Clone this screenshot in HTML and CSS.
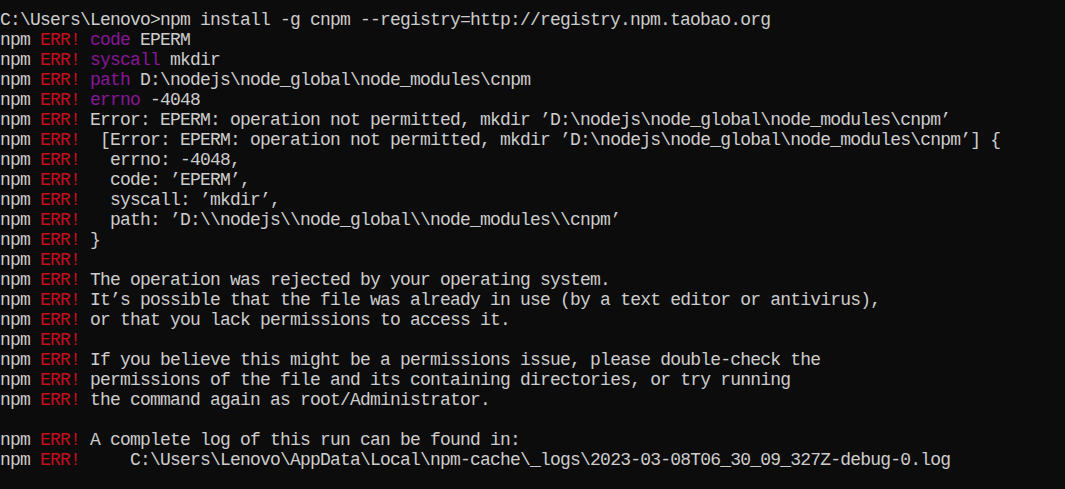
FILE: index.html
```html
<!DOCTYPE html>
<html lang="en">
<head>
<meta charset="utf-8">
<title>npm install error</title>
<link rel="stylesheet" href="styles.css">
</head>
<body>
<main class="console">
<div class="line">C:\Users\Lenovo&gt;npm install -g cnpm --registry=http://registry.npm.taobao.org</div>
<div class="line">npm <span class="err">ERR!</span> <span class="key">code</span> EPERM</div>
<div class="line">npm <span class="err">ERR!</span> <span class="key">syscall</span> mkdir</div>
<div class="line">npm <span class="err">ERR!</span> <span class="key">path</span> D:\nodejs\node_global\node_modules\cnpm</div>
<div class="line">npm <span class="err">ERR!</span> <span class="key">errno</span> -4048</div>
<div class="line">npm <span class="err">ERR!</span> Error: EPERM: operation not permitted, mkdir ’D:\nodejs\node_global\node_modules\cnpm’</div>
<div class="line">npm <span class="err">ERR!</span>  [Error: EPERM: operation not permitted, mkdir ’D:\nodejs\node_global\node_modules\cnpm’] {</div>
<div class="line">npm <span class="err">ERR!</span>   errno: -4048,</div>
<div class="line">npm <span class="err">ERR!</span>   code: ’EPERM’,</div>
<div class="line">npm <span class="err">ERR!</span>   syscall: ’mkdir’,</div>
<div class="line">npm <span class="err">ERR!</span>   path: ’D:\\nodejs\\node_global\\node_modules\\cnpm’</div>
<div class="line">npm <span class="err">ERR!</span> }</div>
<div class="line">npm <span class="err">ERR!</span></div>
<div class="line">npm <span class="err">ERR!</span> The operation was rejected by your operating system.</div>
<div class="line">npm <span class="err">ERR!</span> It’s possible that the file was already in use (by a text editor or antivirus),</div>
<div class="line">npm <span class="err">ERR!</span> or that you lack permissions to access it.</div>
<div class="line">npm <span class="err">ERR!</span></div>
<div class="line">npm <span class="err">ERR!</span> If you believe this might be a permissions issue, please double-check the</div>
<div class="line">npm <span class="err">ERR!</span> permissions of the file and its containing directories, or try running</div>
<div class="line">npm <span class="err">ERR!</span> the command again as root/Administrator.</div>
<div class="line"></div>
<div class="line">npm <span class="err">ERR!</span> A complete log of this run can be found in:</div>
<div class="line">npm <span class="err">ERR!</span>     C:\Users\Lenovo\AppData\Local\npm-cache\_logs\2023-03-08T06_30_09_327Z-debug-0.log</div>
</main>
</body>
</html>
```
FILE: styles.css
```css
html, body {
  margin: 0;
  padding: 0;
  background: #0c0c0c;
}
body {
  width: 1065px;
  height: 489px;
  overflow: hidden;
}
.console {
  padding: 10px 0 0 0;
  font-family: "Liberation Mono", "DejaVu Sans Mono", monospace;
  font-size: 18px;
  letter-spacing: -0.8px;
  color: #cccccc;
}
.line {
  height: 20px;
  line-height: 20px;
  white-space: pre;
}
.err {
  color: #c50f1f;
}
.key {
  color: #881798;
}
```
